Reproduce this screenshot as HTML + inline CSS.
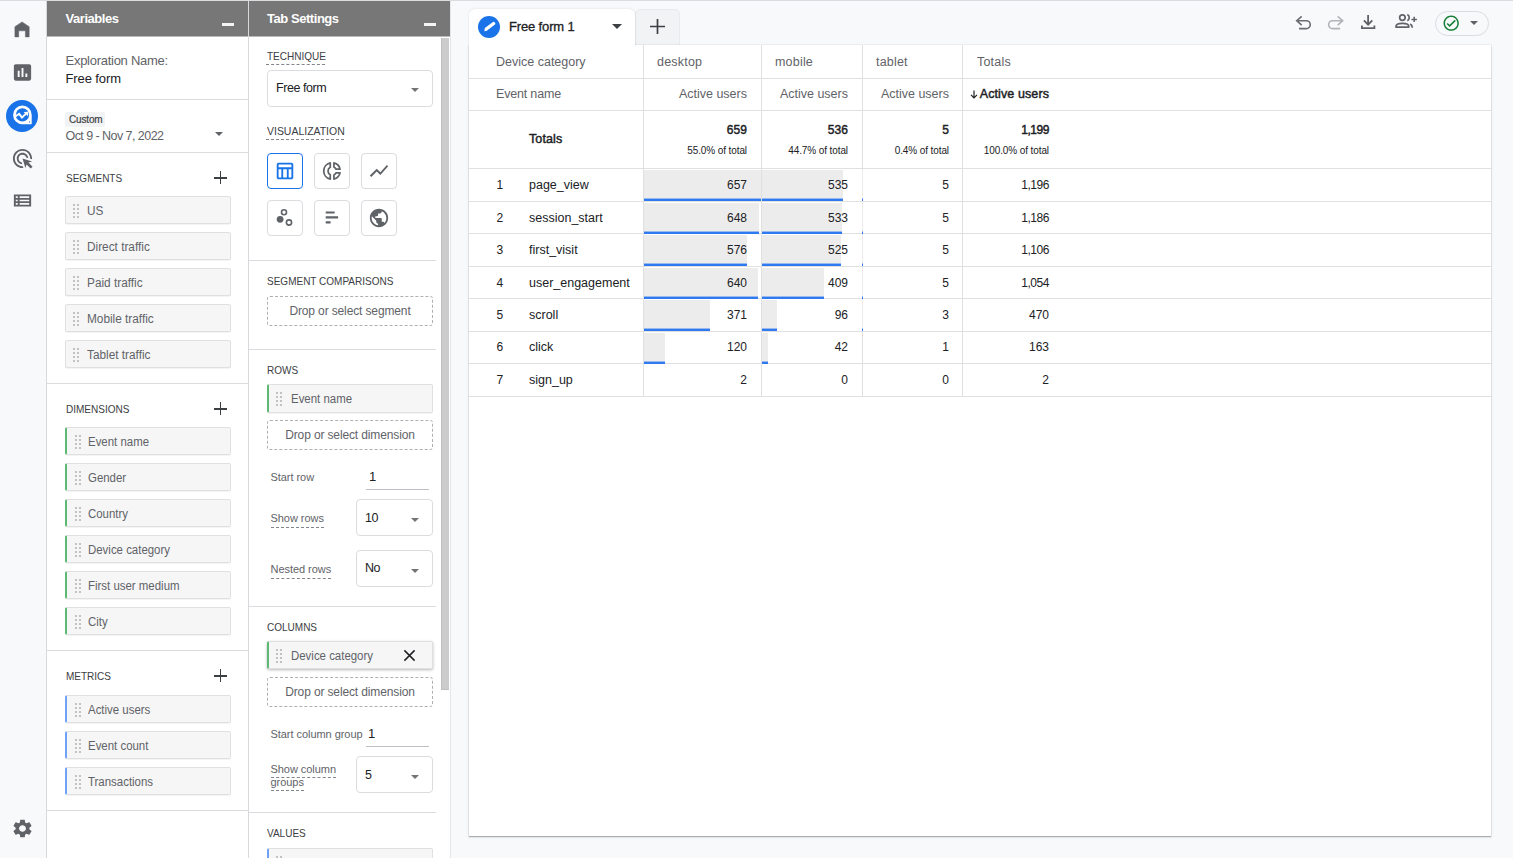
<!DOCTYPE html>
<html lang="en">
<head>
<meta charset="utf-8">
<title>Free form - Explorations</title>
<style>
*{box-sizing:border-box;margin:0;padding:0}
html,body{width:1513px;height:858px;overflow:hidden}
body{background:#f8f9fa;font-family:"Liberation Sans",Arial,sans-serif;font-size:13px;color:#3c4043;position:relative}
.abs{position:absolute}
.t{position:absolute;white-space:nowrap;line-height:16px}
#topline{left:0;top:0;width:1513px;height:1px;background:#dadce0}
/* left nav */
#nav{left:0;top:1px;width:46px;height:857px;background:#f8f9fa}
#nav svg{position:absolute;left:10.5px;width:23px;height:23px;fill:#5f6368}
#nav .sel{position:absolute;left:6px;top:99px;width:32px;height:32px;border-radius:50%;background:#1a73e8}
/* panels */
.panel{top:1px;height:857px;background:#fff;border-left:1px solid #d8d9dc}
.phead{position:absolute;left:0;top:0;right:0;height:36px;border-bottom:1px solid #b9b9b9;background:#777;color:#fff;font-weight:bold;font-size:13px}
.phead .t{top:10px;left:18.500px;letter-spacing:-.45px}
.phead i{position:absolute;right:14px;top:22px;width:12px;height:3px;background:rgba(255,255,255,.92)}
.hr{position:absolute;height:1px;background:#dadce0}
.sec{color:#3c4043;font-size:11.500px;transform:scaleX(.87);transform-origin:0 50%}
.plus{position:absolute;width:13px;height:13px}
.plus:before{content:"";position:absolute;left:0;top:6px;width:13px;height:1.5px;background:#3c4043}
.plus:after{content:"";position:absolute;left:5.75px;top:0;width:1.5px;height:13px;background:#3c4043}
.chip{position:absolute;height:28px;box-shadow:0 1px 0 rgba(0,0,0,.045);background:#f6f6f6;border:1px solid #e0e0e0;border-radius:2px;font-size:12.500px;color:#5f6368;line-height:26px;white-space:nowrap}
.chip .g{position:absolute;top:7px;width:2px;height:2px;background:#c2c2c2;box-shadow:4px 0 #c2c2c2,0 4px #c2c2c2,4px 4px #c2c2c2,0 8px #c2c2c2,4px 8px #c2c2c2,0 12px #c2c2c2,4px 12px #c2c2c2}
.chip span{position:absolute;top:1px;transform:scaleX(.915);transform-origin:0 50%}
.chip.seg .g{left:7px}
.chip.seg span{left:21px;transform:scaleX(.945)}
.chip.dim{border-left:2px solid #5bb974}
.chip.met{border-left:2px solid #6fa2f6}
.chip.dim .g,.chip.met .g{left:8px}
.chip.dim span,.chip.met span{left:21px}
#ts .chip .g{left:7px}
#ts .chip span{left:21.500px}
/* tab settings */
#ts .lbl{color:#3c4043;font-size:11.500px;transform:scaleX(.87);transform-origin:0 50%}
#ts .dash{position:absolute;height:0;border-top:1px dashed #80868b}
#ts .sel{position:absolute;border:1px solid #dadce0;border-radius:4px;background:#fff;font-size:12.500px;color:#202124}
#ts .sel .t{letter-spacing:-.45px}
#ts .sel i{position:absolute;border:4.500px solid transparent;border-top:4.700px solid #747474;border-bottom:0}
#ts .viz{position:absolute;width:36px;height:36px;border:1px solid #dadce0;border-radius:4px;background:#fff}
#ts .viz svg{position:absolute;left:6px;top:6px;width:22px;height:22px;fill:#5f6368}
#ts .viz svg.full{left:-1px;top:-1px;width:36px;height:36px}
#ts .viz.on{border:1.500px solid #1a73e8;background:#fff}
#ts .viz.on svg{left:5.500px;top:5.500px}
#ts .viz.on svg{fill:#1a73e8}
#ts .drop{position:absolute;left:18px;width:166px;height:30px;border:1px dashed #b0b0b0;border-radius:3px;text-align:center;font-size:12px;line-height:28px;color:#5f6368;letter-spacing:-.13px;white-space:nowrap}
#ts .opt{font-size:11px;color:#5f6368;letter-spacing:-.05px}
#ts .uline{position:absolute;height:1px;background:#bdc1c6}

/* main */
#card{left:469px;top:45px;width:1022px;height:791px;background:#fff;box-shadow:0 1px 1px rgba(60,64,67,.34),0 1px 3px rgba(60,64,67,.12),0 0 0 .500px rgba(60,64,67,.07)}
#tab1{left:469px;top:9px;width:166px;height:37px;background:#fff;border-radius:6px 6px 0 0;box-shadow:0 0 2px rgba(60,64,67,.18)}
#tab2{left:635px;top:9px;width:45px;height:37px;background:#f1f3f4;border:1px solid #e8eaed;border-radius:5px 5px 0 0}
#tb svg{position:absolute;fill:#5f6368}
.vl{position:absolute;width:1px;background:#e0e0e0;top:0}
.hl{position:absolute;height:1px;background:#e0e0e0;left:0;right:0}
#card .t{font-size:12.500px;color:#5f6368;line-height:16px}
#card .r{text-align:right}
#card .n{color:#202124;font-size:12px}
#card .b{color:#202124;-webkit-text-stroke:.45px #202124;letter-spacing:.1px}
.bar{position:absolute;background:linear-gradient(to top,#2f7af0 0,#2f7af0 2px,#ececec 2.900px,#ececec 100%)}
</style>
</head>
<body>
<div id="topline" class="abs"></div>

<!-- LEFT NAV -->
<div id="nav" class="abs">
  <svg style="left:0;top:0;width:46px;height:46px" viewBox="0 0 46 46"><path d="M22.050 20.900L29.200 25.700V35.900H25.400V29.800H18.700V35.900H14.900V25.700z" stroke="#5f6368" stroke-width=".5" stroke-linejoin="round"/></svg>
  <svg style="top:60px;transform:scaleY(.95)" viewBox="0 0 24 24"><path d="M19 3H5c-1.100 0-2 .9-2 2v14c0 1.100.9 2 2 2h14c1.100 0 2-.9 2-2V5c0-1.100-.9-2-2-2zM9 17H7v-7h2zm4 0h-2V7h2zm4 0h-2v-4h2z"/></svg>
  <div class="sel"></div>
  <svg style="top:99px;left:6px;width:32px;height:32px;fill:none" viewBox="0 0 32 32"><path d="M16.400 5.600A9.300 9.300 0 1 0 16.400 24.200H25.100a.6.600 0 0 0 .6-.6V14.900A9.300 9.300 0 0 0 16.400 5.600z" fill="#fff"/><circle cx="16.400" cy="14.900" r="6.600" fill="#1a73e8"/><circle cx="23.500" cy="21.900" r=".55" fill="#1a73e8"/><path d="M9.600 16.300L13.200 13.800 16 17.500 20.300 13.400" stroke="#fff" stroke-width="2" stroke-linejoin="miter"/><path d="M17.600 12.100L22 11.800 22 16.200z" fill="#fff"/></svg>
  <svg style="top:145.500px" viewBox="0 0 24 24"><path d="M11.710 17.990A5.993 5.993 0 0 1 6 12c0-3.310 2.690-6 6-6 3.220 0 5.840 2.530 5.990 5.710l-2.100-.63a3.999 3.999 0 1 0-4.810 4.810zM22 12c0 .3-.01.6-.04.9l-1.970-.59c.01-.1.010-.21.010-.31 0-4.420-3.580-8-8-8s-8 3.580-8 8 3.580 8 8 8c.1 0 .21 0 .31-.01l.59 1.970c-.3.030-.6.040-.9.040-5.520 0-10-4.480-10-10S6.480 2 12 2s10 4.480 10 10zm-3.770 4.260L22 15l-10-3 3 10 1.260-3.770 4.270 4.270 1.980-1.980z"/></svg>
  <svg style="top:188.300px;transform:scaleY(.91)" viewBox="0 0 24 24"><path d="M3 5v14h18V5zm4 2v2H5V7zm-2 6v-2h2v2zm0 2h2v2H5zm14 2H9v-2h10zm0-4H9v-2h10zm0-4H9V7h10z"/></svg>
  <svg style="top:816.200px;transform:scaleY(.96)" viewBox="0 0 24 24"><path d="M19.140 12.940c.040-.3.060-.610.060-.940 0-.320-.020-.640-.070-.940l2.030-1.580c.180-.140.230-.410.120-.610l-1.920-3.320c-.120-.220-.370-.290-.590-.220l-2.390.960c-.5-.380-1.030-.7-1.620-.940l-.360-2.540c-.040-.240-.240-.410-.480-.410h-3.840c-.240 0-.430.170-.470.410l-.360 2.540c-.590.240-1.130.570-1.620.940l-2.390-.960c-.220-.080-.470 0-.590.220L2.740 8.870c-.120.210-.080.470.12.610l2.030 1.580c-.050.3-.090.630-.090.940s.020.640.070.940l-2.030 1.580c-.180.140-.230.410-.120.610l1.920 3.320c.120.220.370.290.590.220l2.390-.960c.5.380 1.030.7 1.620.940l.360 2.540c.050.240.240.410.480.410h3.840c.240 0 .440-.170.470-.410l.360-2.540c.590-.240 1.130-.560 1.620-.940l2.390.960c.220.080.470 0 .590-.220l1.920-3.320c.120-.220.070-.470-.12-.610zM12 15.600c-1.980 0-3.600-1.620-3.600-3.600s1.620-3.600 3.600-3.600 3.600 1.620 3.600 3.600-1.620 3.600-3.600 3.600z"/></svg>
</div>

<!-- VARIABLES PANEL -->
<div id="vars" class="abs panel" style="left:46px;width:202px">
  <div class="phead"><div class="t">Variables</div><i></i></div>
  <div class="t" style="left:18.500px;top:52px;color:#5f6368;letter-spacing:-.27px">Exploration Name:</div>
  <div class="t" style="left:18.500px;top:70px;color:#202124;letter-spacing:-.1px">Free form</div>
  <div class="hr" style="left:0;right:0;top:98px"></div>
  <div class="abs" style="left:18px;top:111px;width:40px;height:15px;background:#f1f3f4;border-radius:2px"></div>
  <div class="t" style="left:22px;top:111px;font-size:10px;line-height:15px;color:#3c4043;-webkit-text-stroke:.2px #3c4043;letter-spacing:-.15px">Custom</div>
  <div class="t" style="left:18.500px;top:127px;font-size:12.500px;color:#5f6368;letter-spacing:-.55px">Oct 9 - Nov 7, 2022</div>
  <div class="abs" style="left:168px;top:131px;border:4.500px solid transparent;border-top:4.500px solid #5f6368;border-bottom:0"></div>
  <div class="hr" style="left:0;right:0;top:151px"></div>

  <div class="t sec" style="left:19px;top:169px">SEGMENTS</div>
  <div class="plus" style="left:167px;top:170px"></div>
  <div class="chip seg" style="left:18px;top:195px;width:166px"><div class="g"></div><span>US</span></div>
  <div class="chip seg" style="left:18px;top:231px;width:166px"><div class="g"></div><span>Direct traffic</span></div>
  <div class="chip seg" style="left:18px;top:267px;width:166px"><div class="g"></div><span>Paid traffic</span></div>
  <div class="chip seg" style="left:18px;top:303px;width:166px"><div class="g"></div><span>Mobile traffic</span></div>
  <div class="chip seg" style="left:18px;top:339px;width:166px"><div class="g"></div><span>Tablet traffic</span></div>
  <div class="hr" style="left:0;right:0;top:382px"></div>

  <div class="t sec" style="left:19px;top:400px">DIMENSIONS</div>
  <div class="plus" style="left:167px;top:401px"></div>
  <div class="chip dim" style="left:18px;top:426px;width:166px"><div class="g"></div><span>Event name</span></div>
  <div class="chip dim" style="left:18px;top:462px;width:166px"><div class="g"></div><span>Gender</span></div>
  <div class="chip dim" style="left:18px;top:498px;width:166px"><div class="g"></div><span>Country</span></div>
  <div class="chip dim" style="left:18px;top:534px;width:166px"><div class="g"></div><span>Device category</span></div>
  <div class="chip dim" style="left:18px;top:570px;width:166px"><div class="g"></div><span>First user medium</span></div>
  <div class="chip dim" style="left:18px;top:606px;width:166px"><div class="g"></div><span>City</span></div>
  <div class="hr" style="left:0;right:0;top:649px"></div>

  <div class="t sec" style="left:19px;top:667px">METRICS</div>
  <div class="plus" style="left:167px;top:668px"></div>
  <div class="chip met" style="left:18px;top:694px;width:166px"><div class="g"></div><span>Active users</span></div>
  <div class="chip met" style="left:18px;top:730px;width:166px"><div class="g"></div><span>Event count</span></div>
  <div class="chip met" style="left:18px;top:766px;width:166px"><div class="g"></div><span>Transactions</span></div>
  <div class="hr" style="left:0;right:0;top:809px"></div>
</div>

<!-- TABSETTINGS -->
<div id="ts" class="abs panel" style="left:248px;width:203px;border-right:1px solid #e4e6e9">
  <div class="phead"><div class="t" style="left:18px">Tab Settings</div><i></i></div>
  <div class="abs" style="left:192px;top:37px;width:8px;height:652px;background:#cccccc;border-left:1px solid #bfbfbf;border-bottom:1px solid #bfbfbf"></div>

  <div class="t lbl" style="left:18px;top:47px">TECHNIQUE</div>
  <div class="dash" style="left:17px;top:63px;width:59px"></div>
  <div class="sel" style="left:18px;top:69px;width:166px;height:37px"><div class="t" style="left:8px;top:9px">Free form</div><i style="left:143px;top:17px"></i></div>

  <div class="t lbl" style="left:18px;top:122px;transform:scaleX(.91)">VISUALIZATION</div>
  <div class="dash" style="left:17px;top:138px;width:78px"></div>
  <div class="viz on" style="left:18px;top:152px"><svg viewBox="0 0 24 24"><path d="M19 3H5c-1.100 0-2 .9-2 2v14c0 1.100.9 2 2 2h14c1.100 0 2-.9 2-2V5c0-1.100-.9-2-2-2zm0 2v3H5V5zm-5 14h-4v-9h4zM5 10h3v9H5zm11 9v-9h3v9z"/></svg></div>
  <div class="viz" style="left:65px;top:152px"><svg viewBox="0 0 24 24" style="fill:none;stroke:#5f6368;stroke-width:1.900;stroke-linejoin:round"><path d="M10.100 3.200A9 9 0 0 0 10.100 20.800V16A4.500 4.500 0 0 1 10.100 8z"/><path d="M14.100 3.200A9 9 0 0 1 20.800 9.900H16.300A4.500 4.500 0 0 0 14.100 7.700z"/><path d="M14.100 20.800A9 9 0 0 0 20.800 14.100H16.300A4.500 4.500 0 0 1 14.100 16.300z"/></svg></div>
  <div class="viz" style="left:112px;top:152px"><svg viewBox="0 0 24 24"><path d="M3.500 18.490l6-6.010 4 4L22 6.920l-1.410-1.410-7.090 7.970-4-4L2 16.990z"/></svg></div>
  <div class="viz" style="left:18px;top:199px"><svg class="full" viewBox="0 0 36 36"><circle cx="13.100" cy="19.300" r="3.400"/><circle cx="17" cy="12.300" r="2.500" fill="none" stroke="#5f6368" stroke-width="1.600"/><circle cx="22" cy="22.500" r="2.600" fill="none" stroke="#5f6368" stroke-width="1.600"/></svg></div>
  <div class="viz" style="left:65px;top:199px"><svg class="full" viewBox="0 0 36 36"><path d="M11.700 11.400h8.900v2.200h-8.900zM11.700 16.300h12.400v2.300H11.700zM11.700 21.200h4.900v2.300h-4.900z"/></svg></div>
  <div class="viz" style="left:112px;top:199px"><svg viewBox="0 0 24 24"><path d="M12 2C6.480 2 2 6.480 2 12s4.480 10 10 10 10-4.480 10-10S17.520 2 12 2zm-1 17.930c-3.950-.49-7-3.850-7-7.930 0-.620.080-1.210.210-1.790L9 15v1c0 1.100.9 2 2 2zm6.900-2.540c-.260-.810-1-1.390-1.900-1.390h-1v-3c0-.55-.45-1-1-1H8v-2h2c.55 0 1-.45 1-1V7h2c1.100 0 2-.9 2-2v-.410c2.930 1.190 5 4.060 5 7.410 0 2.080-.8 3.970-2.100 5.390z"/></svg></div>
  <div class="hr" style="left:0;width:187px;top:259px"></div>

  <div class="t lbl" style="left:18px;top:272px">SEGMENT COMPARISONS</div>
  <div class="drop" style="top:295px">Drop or select segment</div>
  <div class="hr" style="left:0;width:187px;top:348px"></div>

  <div class="t lbl" style="left:18px;top:361px">ROWS</div>
  <div class="chip dim" style="left:18px;top:383px;width:166px;height:29px"><div class="g"></div><span>Event name</span></div>
  <div class="drop" style="top:419px">Drop or select dimension</div>
  <div class="t opt" style="left:21.500px;top:468px">Start row</div>
  <div class="t" style="left:120px;top:468px;color:#202124">1</div>
  <div class="uline" style="left:117px;top:488px;width:63px"></div>
  <div class="t opt" style="left:21.500px;top:509px">Show rows</div>
  <div class="dash" style="left:22px;top:526px;width:53px"></div>
  <div class="sel" style="left:107px;top:498px;width:77px;height:37px"><div class="t" style="left:8px;top:10px">10</div><i style="left:54px;top:18px"></i></div>
  <div class="t opt" style="left:21.500px;top:560px">Nested rows</div>
  <div class="dash" style="left:22px;top:577px;width:60px"></div>
  <div class="sel" style="left:107px;top:549px;width:77px;height:37px"><div class="t" style="left:8px;top:9px">No</div><i style="left:54px;top:18px"></i></div>
  <div class="hr" style="left:0;width:187px;top:605px"></div>

  <div class="t lbl" style="left:18px;top:618px">COLUMNS</div>
  <div class="chip dim" style="left:18px;top:640px;width:166px;box-shadow:0 1px 3px rgba(0,0,0,.28)"><div class="g"></div><span>Device category</span>
    <svg style="position:absolute;right:16px;top:6.500px;width:13px;height:13px" viewBox="0 0 14 14"><path d="M1.500 1.500l11 11M12.500 1.500l-11 11" stroke="#202124" stroke-width="1.600" fill="none"/></svg></div>
  <div class="drop" style="top:676px">Drop or select dimension</div>
  <div class="t opt" style="left:21.500px;top:725px">Start column group</div>
  <div class="t" style="left:119px;top:725px;color:#202124">1</div>
  <div class="uline" style="left:117px;top:745px;width:63px"></div>
  <div class="t opt" style="left:21.500px;top:762px;line-height:12.500px;white-space:normal;width:70px">Show column groups</div>
  <div class="dash" style="left:22px;top:776px;width:65px"></div>
  <div class="dash" style="left:22px;top:789px;width:33px"></div>
  <div class="sel" style="left:107px;top:755px;width:77px;height:37px"><div class="t" style="left:8px;top:10px">5</div><i style="left:54px;top:18px"></i></div>
  <div class="hr" style="left:0;width:187px;top:811px"></div>

  <div class="t lbl" style="left:18px;top:824px">VALUES</div>
  <div class="chip met" style="left:18px;top:847px;width:166px"><div class="g"></div><span>Active users</span></div>
</div>
<!-- MAIN -->
<div id="tab2" class="abs"><svg style="position:absolute;left:14px;top:8.800px;width:15px;height:15px" viewBox="0 0 15 15"><path d="M7.500 0v15M0 7.500h15" stroke="#3c4043" stroke-width="1.700" fill="none"/></svg></div>
<div id="card" class="abs">
<div class="hl" style="top:33px"></div>
<div class="hl" style="top:65px"></div>
<div class="hl" style="top:123px"></div>
<div class="hl" style="top:156px"></div>
<div class="hl" style="top:188px"></div>
<div class="hl" style="top:221px"></div>
<div class="hl" style="top:253px"></div>
<div class="hl" style="top:286px"></div>
<div class="hl" style="top:318px"></div>
<div class="hl" style="top:351px"></div>
<div class="vl" style="left:174px;height:352px"></div>
<div class="vl" style="left:292px;height:352px"></div>
<div class="vl" style="left:393px;height:352px"></div>
<div class="vl" style="left:493px;height:352px"></div>
<div class="t " style="left:27px;top:9px;">Device category</div>
<div class="t " style="left:188px;top:9px;letter-spacing:.2px">desktop</div>
<div class="t " style="left:306px;top:9px;letter-spacing:.2px">mobile</div>
<div class="t " style="left:407px;top:9px;letter-spacing:.2px">tablet</div>
<div class="t " style="left:508px;top:9px;letter-spacing:.2px">Totals</div>
<div class="t " style="left:27px;top:41px;letter-spacing:-.18px">Event name</div>
<div class="t r " style="right:744px;top:41px;">Active users</div>
<div class="t r " style="right:643px;top:41px;">Active users</div>
<div class="t r " style="right:542px;top:41px;">Active users</div>
<div class="t r b" style="right:442px;top:41px;"><svg style="position:absolute;left:-10px;top:4px;width:8px;height:9px" viewBox="0 0 8 9"><path d="M4 .5v7M1 4.800l3 3 3-3" stroke="#202124" stroke-width="1.200" fill="none"/></svg>Active users</div>
<div class="t b" style="left:60px;top:86px;">Totals</div>
<div class="t r b n" style="right:744px;top:77px;">659</div>
<div class="t r n" style="right:744px;top:98px;font-size:10px;letter-spacing:-.1px">55.0% of total</div>
<div class="t r b n" style="right:643px;top:77px;">536</div>
<div class="t r n" style="right:643px;top:98px;font-size:10px;letter-spacing:-.1px">44.7% of total</div>
<div class="t r b n" style="right:542px;top:77px;">5</div>
<div class="t r n" style="right:542px;top:98px;font-size:10px;letter-spacing:-.1px">0.4% of total</div>
<div class="t r b n" style="right:442px;top:77px;letter-spacing:-.45px">1,199</div>
<div class="t r n" style="right:442px;top:98px;font-size:10px;letter-spacing:-.1px">100.0% of total</div>
<div class="bar" style="left:175px;top:125px;width:117.0px;height:31px"></div>
<div class="bar" style="left:293px;top:125px;width:80.6px;height:31px"></div>
<div class="bar" style="left:393px;top:125px;width:1.0px;height:31px"></div>
<div class="t n" style="left:27.500px;top:132px;">1</div>
<div class="t n" style="left:60px;top:132px;font-size:12.500px">page_view</div>
<div class="t r n" style="right:744px;top:132px;">657</div>
<div class="t r n" style="right:643px;top:132px;">535</div>
<div class="t r n" style="right:542px;top:132px;">5</div>
<div class="t r n" style="right:442px;top:132px;letter-spacing:-.45px">1,196</div>
<div class="bar" style="left:175px;top:158px;width:115.4px;height:31px"></div>
<div class="bar" style="left:293px;top:158px;width:80.3px;height:31px"></div>
<div class="bar" style="left:393px;top:158px;width:1.0px;height:31px"></div>
<div class="t n" style="left:27.500px;top:165px;">2</div>
<div class="t n" style="left:60px;top:165px;font-size:12.500px">session_start</div>
<div class="t r n" style="right:744px;top:165px;">648</div>
<div class="t r n" style="right:643px;top:165px;">533</div>
<div class="t r n" style="right:542px;top:165px;">5</div>
<div class="t r n" style="right:442px;top:165px;letter-spacing:-.45px">1,186</div>
<div class="bar" style="left:175px;top:190px;width:102.6px;height:31px"></div>
<div class="bar" style="left:293px;top:190px;width:79.1px;height:31px"></div>
<div class="bar" style="left:393px;top:190px;width:1.0px;height:31px"></div>
<div class="t n" style="left:27.500px;top:197px;">3</div>
<div class="t n" style="left:60px;top:197px;font-size:12.500px">first_visit</div>
<div class="t r n" style="right:744px;top:197px;">576</div>
<div class="t r n" style="right:643px;top:197px;">525</div>
<div class="t r n" style="right:542px;top:197px;">5</div>
<div class="t r n" style="right:442px;top:197px;letter-spacing:-.45px">1,106</div>
<div class="bar" style="left:175px;top:223px;width:114.0px;height:31px"></div>
<div class="bar" style="left:293px;top:223px;width:61.7px;height:31px"></div>
<div class="bar" style="left:393px;top:223px;width:1.0px;height:31px"></div>
<div class="t n" style="left:27.500px;top:230px;">4</div>
<div class="t n" style="left:60px;top:230px;font-size:12.500px">user_engagement</div>
<div class="t r n" style="right:744px;top:230px;">640</div>
<div class="t r n" style="right:643px;top:230px;">409</div>
<div class="t r n" style="right:542px;top:230px;">5</div>
<div class="t r n" style="right:442px;top:230px;letter-spacing:-.45px">1,054</div>
<div class="bar" style="left:175px;top:255px;width:66.1px;height:31px"></div>
<div class="bar" style="left:293px;top:255px;width:14.5px;height:31px"></div>
<div class="bar" style="left:393px;top:255px;width:1.0px;height:31px"></div>
<div class="t n" style="left:27.500px;top:262px;">5</div>
<div class="t n" style="left:60px;top:262px;font-size:12.500px">scroll</div>
<div class="t r n" style="right:744px;top:262px;">371</div>
<div class="t r n" style="right:643px;top:262px;">96</div>
<div class="t r n" style="right:542px;top:262px;">3</div>
<div class="t r n" style="right:442px;top:262px;">470</div>
<div class="bar" style="left:175px;top:288px;width:21.4px;height:31px"></div>
<div class="bar" style="left:293px;top:288px;width:6.3px;height:31px"></div>
<div class="t n" style="left:27.500px;top:294px;">6</div>
<div class="t n" style="left:60px;top:294px;font-size:12.500px">click</div>
<div class="t r n" style="right:744px;top:294px;">120</div>
<div class="t r n" style="right:643px;top:294px;">42</div>
<div class="t r n" style="right:542px;top:294px;">1</div>
<div class="t r n" style="right:442px;top:294px;">163</div>
<div class="t n" style="left:27.500px;top:327px;">7</div>
<div class="t n" style="left:60px;top:327px;font-size:12.500px">sign_up</div>
<div class="t r n" style="right:744px;top:327px;">2</div>
<div class="t r n" style="right:643px;top:327px;">0</div>
<div class="t r n" style="right:542px;top:327px;">0</div>
<div class="t r n" style="right:442px;top:327px;">2</div>
</div>
<div id="tab1" class="abs"><div class="abs" style="left:0;right:0;bottom:-3px;height:5px;background:#fff"></div>
<div class="abs" style="left:9px;top:7px;width:22px;height:22px;border-radius:50%;background:#1a73e8"></div>
<svg style="position:absolute;left:9px;top:7px;width:22px;height:22px" viewBox="0 0 22 22"><g transform="translate(11.500 10.600) rotate(-37)"><path d="M-7 .6L-4.600-1.600H5.600a1.100 1.100 0 0 1 1.100 1.100v1a1.100 1.100 0 0 1-1.100 1.100H-4.600z" fill="#fff"/></g></svg>
<div class="t" style="left:40px;top:10px;font-size:13px;color:#202124;-webkit-text-stroke:.3px #202124;letter-spacing:-.15px">Free form 1</div>
<div class="abs" style="left:143px;top:15px;border:5.200px solid transparent;border-top:5.200px solid #3c4043;border-bottom:0"></div>
</div>
<div id="tb">
<svg style="left:1290px;top:8px;width:130px;height:28px;fill:none;stroke:#5f6368;stroke-width:1.700" viewBox="1290 8 130 28">
<path d="M1301.700 16.300L1296.700 20.700 1301.700 25.100M1297 20.700H1306.300a3.950 3.950 0 0 1 0 7.900H1299" stroke="#6a6d71" stroke-width="1.600"/>
<path d="M1337.700 16.300L1342.700 20.700 1337.700 25.100M1342.400 20.700H1332.600a3.950 3.950 0 0 0 0 7.900H1340.100" stroke="#b1b3b6" stroke-width="1.600"/>
<path d="M1368.100 15.100V24.600M1363.900 20.400L1368.100 24.700 1372.300 20.400M1361.900 25.500V28.100H1374.400V25.500" stroke-width="1.800"/>
<circle cx="1402.400" cy="17.600" r="2.750"/>
<path d="M1396 27.100v-.7c0-1.900 3-3 6.400-3s6.400 1.100 6.400 3v.7z" stroke-linejoin="round"/>
<path d="M1407.300 14.600c2.600.9 2.600 5.100 0 6M1410.200 23.900c1.600.8 2.100 1.800 2.100 3.900" />
<path d="M1414.200 16.700v5.400M1411.500 19.400h5.400" stroke-width="1.500"/>
</svg>
<div class="abs" style="left:1435px;top:11px;width:54px;height:25px;border:1px solid #dadce0;border-radius:13px"></div>
<svg style="left:1441.600px;top:13.600px;width:18.400px;height:18.400px;fill:#188038" viewBox="0 0 24 24"><path d="M12 2C6.480 2 2 6.480 2 12s4.480 10 10 10 10-4.480 10-10S17.520 2 12 2zm0 18c-4.410 0-8-3.590-8-8s3.590-8 8-8 8 3.590 8 8-3.590 8-8 8zm4.590-12.420L10 14.170l-2.590-2.580L6 13l4 4 8-8z"/></svg>
<div class="abs" style="left:1469.500px;top:21px;border:4px solid transparent;border-top:4.500px solid #5f6368;border-bottom:0"></div>
</div>
</body>
</html>
